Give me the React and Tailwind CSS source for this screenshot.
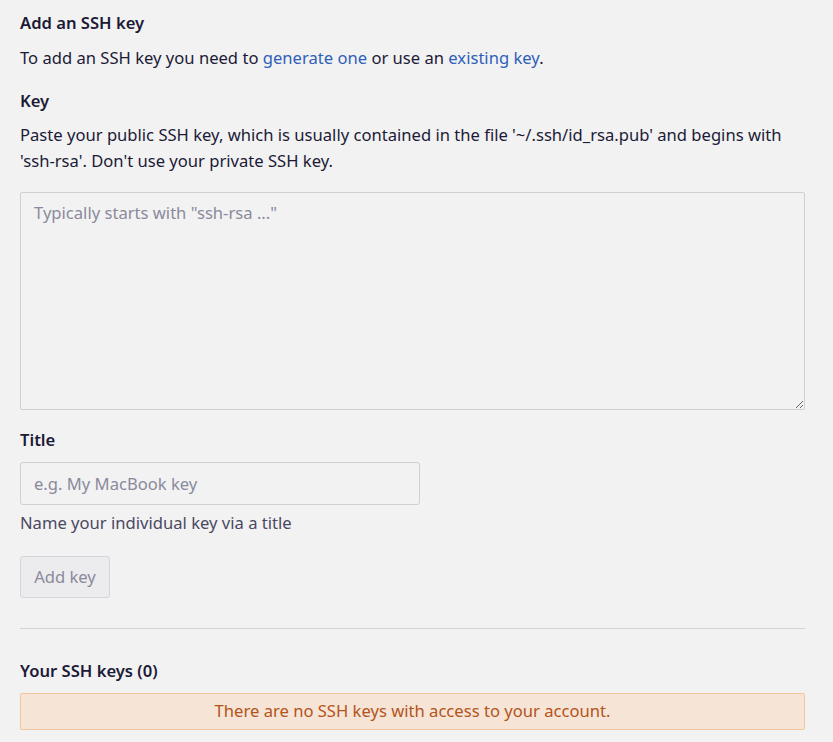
export default function App() {
    return (
        <div className="min-h-[742px] bg-[#f2f2f3] text-[#1c1a36] pl-5 pr-[28px] pt-[10px] pb-3 text-[16.6px]" style={{ fontFamily: '"Noto Sans", sans-serif' }}>
            <h3 className="font-semibold leading-[26px]">Add an SSH key</h3>
            <p className="mt-[9px] leading-[26px]">
                To add an SSH key you need to <a className="text-[#2f5fb8]">generate one</a> or use an <a className="text-[#2f5fb8]">existing key</a>.
            </p>
            <div className="mt-[17px] font-semibold leading-[26px]">Key</div>
            <p className="mt-[8px] leading-[26px]">
                Paste your public SSH key, which is usually contained in the file '~/.ssh/id_rsa.pub' and begins with 'ssh-rsa'. Don't use your private SSH key.
            </p>
            <textarea
                className="mt-[18px] block w-full h-[218px] border border-[#cfcfd6] rounded-[2px] bg-[#f2f2f3] px-[13px] py-[8px] placeholder:text-[#8a8a9b] outline-none"
                placeholder={'Typically starts with "ssh-rsa ..."'}
            />
            <div className="mt-[17px] font-semibold leading-[26px]">Title</div>
            <input
                className="mt-[9px] block w-[400px] h-[43px] border border-[#cfcfd6] rounded-[3px] bg-[#f2f2f3] px-[13px] placeholder:text-[#8a8a9b] outline-none"
                placeholder="e.g. My MacBook key"
            />
            <p className="mt-[5px] leading-[26px] text-[#4a4960]">Name your individual key via a title</p>
            <button className="mt-[20px] block h-[42px] w-[90px] border border-[#d4d4da] rounded-[3px] bg-[#ececee] text-[#8a8a9b]">Add key</button>
            <hr className="mt-[30px] border-t border-[#d4d4d8]" />
            <h4 className="mt-[29px] font-semibold leading-[26px]">Your SSH keys (0)</h4>
            <div className="mt-[9px] h-[37px] flex items-center justify-center border border-[#f0c89c] rounded-[2px] bg-[#f6e4d6] text-[#b2541b]">
                There are no SSH keys with access to your account.
            </div>
        </div>
    );
}
